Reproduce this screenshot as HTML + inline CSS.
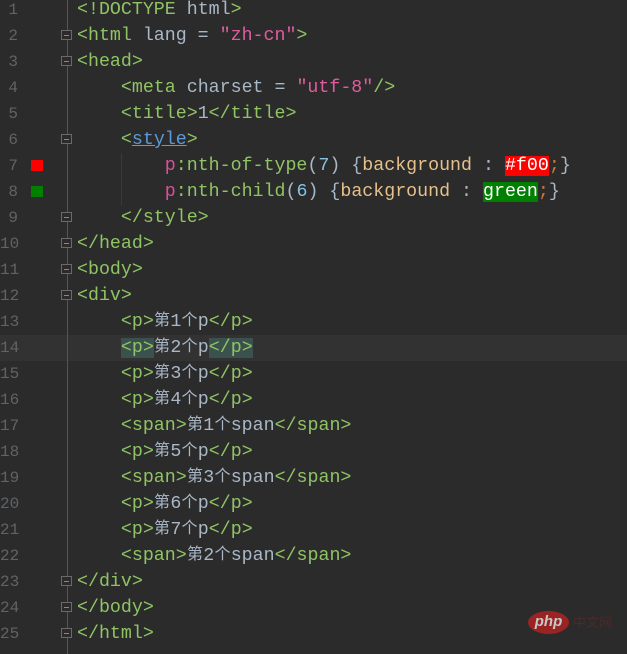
<!DOCTYPE html>
<html><head><meta charset="utf-8"><style>
body{margin:0;width:627px;height:654px;background:#2b2b2b;overflow:hidden;position:relative;font-family:"Liberation Mono",monospace;font-size:18.3px;color:#a9b7c6}
.l{position:absolute;left:0;height:26px;line-height:26px;width:627px;white-space:pre;overflow:hidden}
.n{position:absolute;left:0;width:18px;text-align:right;color:#606366;font-size:16px;line-height:26px}
.c{position:absolute;left:77px;top:0;height:26px;line-height:26px}
.t{color:#8fc464}.s{color:#df5d9f}.p{color:#d8509a}.k{color:#e6c08a}.num{color:#87c3e0}.o{color:#cc7832}
.z{display:inline-block;position:relative;top:-4px;width:16.5px;height:26px;line-height:26px;vertical-align:top;font-family:"Noto Sans CJK SC",sans-serif;font-size:16px;text-align:center}
.gut{position:absolute;left:67px;top:0;width:1px;height:654px;background:#555}
.f{position:absolute;left:61px;width:11px;height:10px;border:1px solid #6a6a6a;background:#2b2b2b;box-sizing:border-box}
.f:after{content:"";position:absolute;left:2px;top:4px;width:5px;height:1px;background:#888}
.hl{background:#3b514d}
</style></head><body>
<div class="l" style="top:335px;background:#323232"></div>
<div class="gut"></div>
<div style="position:absolute;left:121px;top:153px;width:1px;height:52px;background:#3a3a3a"></div>
<div style="position:absolute;left:31px;top:160px;width:12px;height:11px;background:#f00"></div>
<div style="position:absolute;left:31px;top:186px;width:12px;height:11px;background:#008000"></div>
<div class="f" style="top:30px"></div><div class="f" style="top:56px"></div><div class="f" style="top:134px"></div>
<div class="f" style="top:212px"></div><div class="f" style="top:238px"></div><div class="f" style="top:264px"></div><div class="f" style="top:290px"></div>
<div class="f" style="top:576px"></div><div class="f" style="top:602px"></div><div class="f" style="top:628px"></div>
<div class="l" style="top:-3px"><span class="n">1</span><span class="c"><span class="t">&lt;!DOCTYPE</span> html<span class="t">&gt;</span></span></div>
<div class="l" style="top:23px"><span class="n">2</span><span class="c"><span class="t">&lt;html</span> lang = <span class="s">"zh-cn"</span><span class="t">&gt;</span></span></div>
<div class="l" style="top:49px"><span class="n">3</span><span class="c"><span class="t">&lt;head&gt;</span></span></div>
<div class="l" style="top:75px"><span class="n">4</span><span class="c">    <span class="t">&lt;meta</span> charset = <span class="s">"utf-8"</span><span class="t">/&gt;</span></span></div>
<div class="l" style="top:101px"><span class="n">5</span><span class="c">    <span class="t">&lt;title&gt;</span>1<span class="t">&lt;/title&gt;</span></span></div>
<div class="l" style="top:127px"><span class="n">6</span><span class="c">    <span class="t">&lt;</span><span style="color:#5d9ad6;text-decoration:underline">style</span><span class="t">&gt;</span></span></div>
<div class="l" style="top:153px"><span class="n">7</span><span class="c">        <span class="p">p</span><span class="t">:nth-of-type</span>(<span class="num">7</span>) {<span class="k">background</span> : <span style="background:#f00;color:#fff">#f00</span><span class="o">;</span>}</span></div>
<div class="l" style="top:179px"><span class="n">8</span><span class="c">        <span class="p">p</span><span class="t">:nth-child</span>(<span class="num">6</span>) {<span class="k">background</span> : <span style="background:#008000;color:#fff">green</span><span class="o">;</span>}</span></div>
<div class="l" style="top:205px"><span class="n">9</span><span class="c">    <span class="t">&lt;/style&gt;</span></span></div>
<div class="l" style="top:231px"><span class="n">10</span><span class="c"><span class="t">&lt;/head&gt;</span></span></div>
<div class="l" style="top:257px"><span class="n">11</span><span class="c"><span class="t">&lt;body&gt;</span></span></div>
<div class="l" style="top:283px"><span class="n">12</span><span class="c"><span class="t">&lt;div&gt;</span></span></div>
<div class="l" style="top:309px"><span class="n">13</span><span class="c">    <span class="t">&lt;p&gt;</span><span class="z">第</span>1<span class="z">个</span>p<span class="t">&lt;/p&gt;</span></span></div>
<div class="l" style="top:335px"><span class="n">14</span><span class="c">    <span class="t hl">&lt;p&gt;</span><span class="z">第</span>2<span class="z">个</span>p<span class="t hl">&lt;/p&gt;</span></span></div>
<div class="l" style="top:361px"><span class="n">15</span><span class="c">    <span class="t">&lt;p&gt;</span><span class="z">第</span>3<span class="z">个</span>p<span class="t">&lt;/p&gt;</span></span></div>
<div class="l" style="top:387px"><span class="n">16</span><span class="c">    <span class="t">&lt;p&gt;</span><span class="z">第</span>4<span class="z">个</span>p<span class="t">&lt;/p&gt;</span></span></div>
<div class="l" style="top:413px"><span class="n">17</span><span class="c">    <span class="t">&lt;span&gt;</span><span class="z">第</span>1<span class="z">个</span>span<span class="t">&lt;/span&gt;</span></span></div>
<div class="l" style="top:439px"><span class="n">18</span><span class="c">    <span class="t">&lt;p&gt;</span><span class="z">第</span>5<span class="z">个</span>p<span class="t">&lt;/p&gt;</span></span></div>
<div class="l" style="top:465px"><span class="n">19</span><span class="c">    <span class="t">&lt;span&gt;</span><span class="z">第</span>3<span class="z">个</span>span<span class="t">&lt;/span&gt;</span></span></div>
<div class="l" style="top:491px"><span class="n">20</span><span class="c">    <span class="t">&lt;p&gt;</span><span class="z">第</span>6<span class="z">个</span>p<span class="t">&lt;/p&gt;</span></span></div>
<div class="l" style="top:517px"><span class="n">21</span><span class="c">    <span class="t">&lt;p&gt;</span><span class="z">第</span>7<span class="z">个</span>p<span class="t">&lt;/p&gt;</span></span></div>
<div class="l" style="top:543px"><span class="n">22</span><span class="c">    <span class="t">&lt;span&gt;</span><span class="z">第</span>2<span class="z">个</span>span<span class="t">&lt;/span&gt;</span></span></div>
<div class="l" style="top:569px"><span class="n">23</span><span class="c"><span class="t">&lt;/div&gt;</span></span></div>
<div class="l" style="top:595px"><span class="n">24</span><span class="c"><span class="t">&lt;/body&gt;</span></span></div>
<div class="l" style="top:621px"><span class="n">25</span><span class="c"><span class="t">&lt;/html&gt;</span></span></div>
<div style="position:absolute;left:528px;top:611px;width:41px;height:23px;border-radius:50%;background:#9a2424;color:#c8c8c8;font-family:'Liberation Sans',sans-serif;font-style:italic;font-weight:bold;font-size:15px;line-height:22px;text-align:center">php</div>
<div style="position:absolute;left:573px;top:612px;color:#4a2a2a;font-family:'Noto Sans CJK SC',sans-serif;font-size:13px">中文网</div>
</body></html>
